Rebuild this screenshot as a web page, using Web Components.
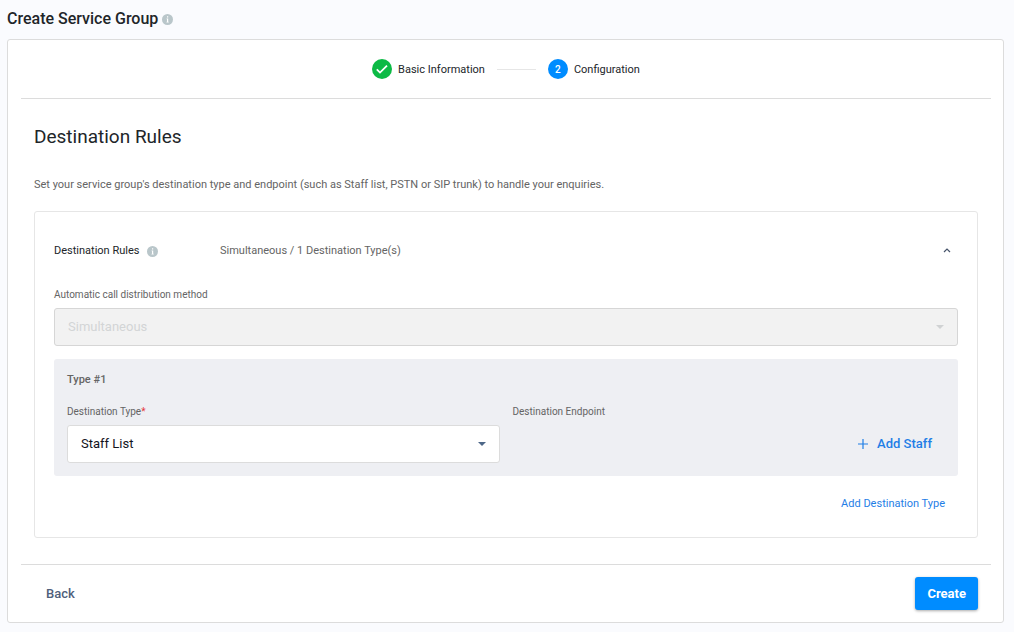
<!DOCTYPE html>
<html lang="en">
<head>
<meta charset="utf-8">
<meta name="viewport" content="width=device-width, initial-scale=1">
<title>Create Service Group</title>
<style>
  body {
    margin: 0;
    background: #fafbfe;
    color: #212529;
    font-family: Roboto, "Liberation Sans", sans-serif;
    font-size: 11px;
    line-height: 16px;
    --line: #dcdcdc;
    --line-light: #e6e6e6;
    --muted: #646464;
    --blue: #008cff;
    --link: #1f7ee6;
    --slate: #4f607b;
  }
</style>
</head>
<body>
<service-group-page></service-group-page>

<script>
// Small grey "i" badge shown after a title.
class InfoIcon extends HTMLElement {
  connectedCallback() {
    this.attachShadow({ mode: "open" });
    this.shadowRoot.innerHTML = `
      <style>
        :host { display: inline-flex; }
        svg { display: block; width: 11px; height: 11px; }
      </style>
      <svg viewBox="0 0 11 11" aria-hidden="true">
        <circle cx="5.5" cy="5.5" r="5.5" fill="#b9c6ca"/>
        <path d="M5 2.3h1.2v1.2H5zM4.6 4.5h1.6v3.2h.5v.8H4.5v-.8H5V5.3h-.4z" fill="#fff"/>
      </svg>
    `;
  }
}

// One step of the wizard: `state` is "done" or "current".
class WizardStep extends HTMLElement {
  connectedCallback() {
    const done = this.getAttribute("state") === "done";
    const mark = done
      ? `<svg viewBox="0 0 20 20" aria-hidden="true">
           <path d="M4.8 10.4l3.2 3.2L15 6.6" fill="none" stroke="#fff" stroke-width="1.8"/>
         </svg>`
      : this.getAttribute("number");

    this.attachShadow({ mode: "open" });
    this.shadowRoot.innerHTML = `
      <style>
        :host {
          display: flex;
          align-items: center;
          gap: 6px;
          line-height: 17px;
        }
        .mark {
          display: flex;
          align-items: center;
          justify-content: center;
          width: 20px;
          height: 20px;
          border-radius: 50%;
          background: ${done ? "#0cba45" : "var(--blue)"};
          color: #fff;
          font-size: 10px;
          font-weight: 500;
        }
        svg { width: 20px; height: 20px; }
      </style>
      <span class="mark">${mark}</span>
      <slot></slot>
    `;
  }
}

// Labelled drop-down. Options are comma separated in `options`.
class SelectField extends HTMLElement {
  connectedCallback() {
    const options = this.getAttribute("options").split(",");
    const required = this.hasAttribute("required");
    const disabled = this.hasAttribute("disabled");

    this.attachShadow({ mode: "open" });
    this.shadowRoot.innerHTML = `
      <style>
        :host { display: block; }
        label {
          display: block;
          color: var(--muted);
          font-size: 10px;
          line-height: 12px;
          margin-bottom: 7px;
        }
        sup {
          color: #e5383b;
          font-size: 10px;
          line-height: 0;
          vertical-align: baseline;
        }
        .box {
          display: grid;
          align-items: center;
        }
        select, svg { grid-area: 1 / 1; }
        select {
          appearance: none;
          box-sizing: border-box;
          width: 100%;
          height: 38px;
          margin: 0;
          padding: 0 32px 0 13px;
          border: 1px solid var(--line);
          border-radius: 3px;
          background: #fff;
          color: #12131c;
          font: 13px/18px Roboto, "Liberation Sans", sans-serif;
        }
        select:disabled {
          background: #f2f2f2;
          border-color: #d6d6d6;
          color: #d3d5d6;
          opacity: 1;
        }
        svg {
          justify-self: end;
          width: 8px;
          height: 4px;
          margin-right: 14px;
          fill: #4d6788;
          pointer-events: none;
        }
        select:disabled + svg { fill: #d0d2d3; }
      </style>
      <label for="field">${this.getAttribute("label")}${required ? "<sup>*</sup>" : ""}</label>
      <div class="box">
        <select id="field" ${required ? "required" : ""} ${disabled ? "disabled" : ""}>
          ${options.map(text => `<option>${text}</option>`).join("")}
        </select>
        <svg viewBox="0 0 8 4" aria-hidden="true"><path d="M0 0h8L4 4z"/></svg>
      </div>
    `;
  }
}

// Grey block holding one destination type and its endpoint.
class DestinationType extends HTMLElement {
  connectedCallback() {
    this.attachShadow({ mode: "open" });
    this.shadowRoot.innerHTML = `
      <style>
        :host {
          display: block;
          padding: 13px;
          border-radius: 3px;
          background: #eeeff3;
        }
        h4 {
          margin: 0 0 18px;
          color: var(--muted);
          font-size: 11px;
          font-weight: 500;
          line-height: 16px;
        }
        .columns {
          display: grid;
          grid-template-columns: 1fr 1fr;
          gap: 13px;
        }
        .endpoint {
          display: flex;
          flex-direction: column;
          gap: 7px;
        }
        .caption {
          color: var(--muted);
          font-size: 10px;
          line-height: 12px;
        }
        button {
          display: flex;
          align-items: center;
          align-self: flex-end;
          gap: 9px;
          height: 38px;
          padding: 0 13px;
          border: 0;
          background: none;
          color: var(--link);
          font: 500 13px/18px Roboto, "Liberation Sans", sans-serif;
          cursor: pointer;
        }
        svg { width: 10px; height: 10px; }
      </style>
      <h4>Type #${this.getAttribute("number")}</h4>
      <div class="columns">
        <select-field label="Destination Type" options="Staff List,PSTN,SIP Trunk" required></select-field>
        <div class="endpoint">
          <span class="caption">Destination Endpoint</span>
          <button type="button">
            <svg viewBox="0 0 10 10" aria-hidden="true">
              <path d="M5 0v10M0 5h10" stroke="currentColor" stroke-width="1.2"/>
            </svg>
            Add Staff
          </button>
        </div>
      </div>
    `;
  }
}

// Bordered panel with a collapsible header row.
class RulePanel extends HTMLElement {
  connectedCallback() {
    this.attachShadow({ mode: "open" });
    this.shadowRoot.innerHTML = `
      <style>
        :host {
          display: block;
          padding: 31px 19px 25px;
          border: 1px solid var(--line-light);
          border-radius: 3px;
        }
        header {
          display: flex;
          align-items: center;
          margin-bottom: 30px;
        }
        h3 {
          display: flex;
          align-items: center;
          gap: 8px;
          flex: 0 0 166px;
          margin: 0;
          font-size: 11px;
          font-weight: 400;
          line-height: 16px;
        }
        .summary {
          flex: 1;
          color: var(--muted);
        }
        button {
          display: flex;
          padding: 4px 7px;
          border: 0;
          background: none;
          cursor: pointer;
        }
        svg { width: 8px; height: 8px; }
      </style>
      <header>
        <h3>${this.getAttribute("heading")} <info-icon></info-icon></h3>
        <span class="summary">${this.getAttribute("summary")}</span>
        <button type="button" aria-label="Collapse" aria-expanded="true">
          <svg viewBox="0 0 8 8" aria-hidden="true">
            <path d="M1 5l3-3 3 3" fill="none" stroke="#46536a" stroke-width="1.2"/>
          </svg>
        </button>
      </header>
      <div class="body"><slot></slot></div>
    `;

    const button = this.shadowRoot.querySelector("button");
    const body = this.shadowRoot.querySelector(".body");
    button.addEventListener("click", () => {
      body.hidden = !body.hidden;
      button.setAttribute("aria-expanded", String(!body.hidden));
    });
  }
}

class ServiceGroupPage extends HTMLElement {
  connectedCallback() {
    this.attachShadow({ mode: "open" });
    this.shadowRoot.innerHTML = `
      <style>
        :host {
          display: block;
          padding: 8px 10px 9px 7px;
        }
        h1 {
          display: flex;
          align-items: center;
          gap: 4px;
          margin: 0 0 9px;
          font-size: 16px;
          font-weight: 500;
          line-height: 22px;
        }
        .card {
          padding: 0 12px 0 13px;
          border: 1px solid var(--line);
          border-radius: 3px;
          background: #fff;
        }
        .steps {
          display: flex;
          align-items: center;
          justify-content: center;
          gap: 12px;
          padding: 19px 0;
          border-bottom: 1px solid var(--line);
        }
        .steps hr {
          width: 39px;
          margin: 0;
          border: 0;
          border-top: 1px solid var(--line-light);
        }
        .content { padding: 26px 13px 26px; }
        h2 {
          margin: 0 0 28px;
          font-size: 19px;
          font-weight: 400;
          line-height: 24px;
        }
        p {
          margin: 0 0 18px;
          color: var(--muted);
        }
        destination-type { margin: 13px 0 20px; }
        .more {
          display: flex;
          justify-content: flex-end;
          padding-right: 13px;
        }
        a {
          color: var(--link);
          text-decoration: none;
        }
        footer {
          display: flex;
          align-items: center;
          justify-content: space-between;
          padding: 12px 13px;
          border-top: 1px solid var(--line);
        }
        footer button {
          height: 33px;
          padding: 0 12px;
          border: 0;
          border-radius: 3px;
          background: none;
          color: var(--slate);
          font: 500 13px/18px Roboto, "Liberation Sans", sans-serif;
          cursor: pointer;
        }
        footer .primary {
          background: var(--blue);
          box-shadow: 0 1px 3px #0005;
          color: #fff;
          font-weight: 700;
        }
      </style>

      <h1>Create Service Group <info-icon></info-icon></h1>
      <main class="card">
        <div class="steps">
          <wizard-step state="done">Basic Information</wizard-step>
          <hr>
          <wizard-step state="current" number="2">Configuration</wizard-step>
        </div>
        <section class="content">
          <h2>Destination Rules</h2>
          <p>Set your service group's destination type and endpoint (such as Staff list, PSTN or SIP trunk) to handle your enquiries.</p>
          <rule-panel heading="Destination Rules" summary="Simultaneous / 1 Destination Type(s)">
            <select-field label="Automatic call distribution method" options="Simultaneous" disabled></select-field>
            <destination-type number="1"></destination-type>
            <div class="more"><a href="#add-type">Add Destination Type</a></div>
          </rule-panel>
        </section>
        <footer>
          <button type="button">Back</button>
          <button type="button" class="primary">Create</button>
        </footer>
      </main>
    `;
  }
}

customElements.define("info-icon", InfoIcon);
customElements.define("wizard-step", WizardStep);
customElements.define("select-field", SelectField);
customElements.define("destination-type", DestinationType);
customElements.define("rule-panel", RulePanel);
customElements.define("service-group-page", ServiceGroupPage);
</script>
</body>
</html>
